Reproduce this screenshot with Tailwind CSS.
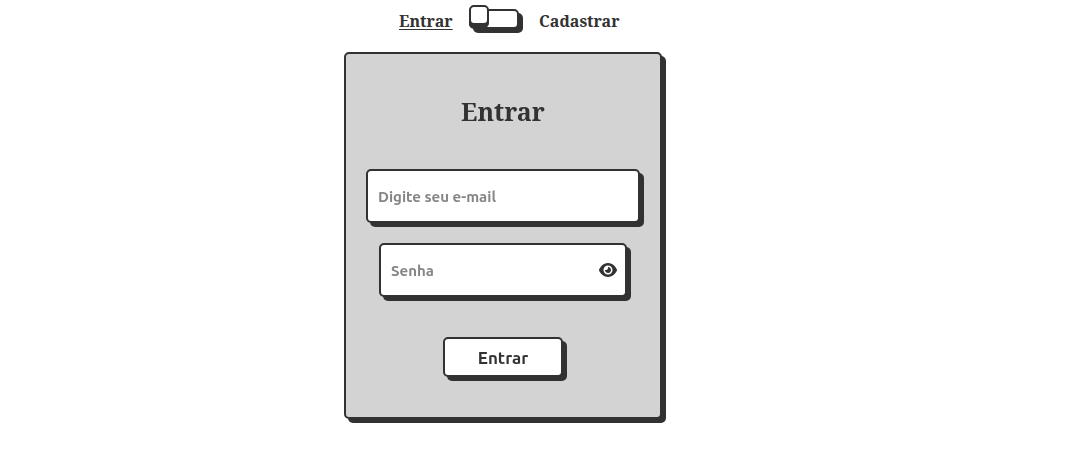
<!DOCTYPE html>
<html lang="pt-BR">
<head>
<meta charset="utf-8">
<title>Entrar</title>
<script src="https://cdn.jsdelivr.net/npm/@tailwindcss/browser@4"></script>
</head>
<body class="h-[467px] overflow-hidden bg-white text-[#323232]">
<main class="ml-[344px] flex w-[318px] flex-col">
  <div class="flex h-[52px] pl-[55px] font-['Noto_Serif','Droid_Serif','DejaVu_Serif',serif] text-base font-bold">
    <span class="mt-[9px] w-[54px] whitespace-nowrap leading-6"><span class="inline-block w-[54px] underline underline-offset-2">Entrar</span></span>
    <div class="relative ml-4 mt-[9px] h-5 w-[50px] rounded-[5px] border-2 border-[#323232] bg-white shadow-[4px_4px_#323232]">
      <div class="absolute -left-0.5 -top-1.5 h-5 w-5 rounded-[5px] border-2 border-[#323232] bg-white shadow-[0_3px_0_#323232]"></div>
    </div>
    <span class="ml-5 mt-[9px] whitespace-nowrap pl-[0.1px] leading-6">Cadastrar</span>
  </div>
  <form class="flex h-[367px] flex-col items-center rounded-[5px] border-2 border-[#323232] bg-[lightgrey] shadow-[4px_4px_#323232] will-change-transform">
    <h1 class="mt-[37px] font-['Noto_Serif','Droid_Serif','DejaVu_Serif',serif] text-[25px] font-bold leading-10">Entrar</h1>
    <div class="mt-[38px] flex h-[54px] w-[274px] items-center rounded-[5px] border-2 border-[#323232] bg-white px-2.5 shadow-[4px_4px_#323232]">
      <span class="pt-0.5 font-[Ubuntu,'Noto_Sans',sans-serif] text-[15px] font-semibold text-[#858585]">Digite seu e-mail</span>
    </div>
    <div class="mt-5 flex h-[54px] w-[248px] items-center justify-between rounded-[5px] border-2 border-[#323232] bg-white pl-2.5 pr-2 shadow-[4px_4px_#323232]">
      <span class="pt-0.5 font-[Ubuntu,'Noto_Sans',sans-serif] text-[15px] font-semibold text-[#858585]">Senha</span>
      <svg class="h-4 w-[18px]" viewBox="0 0 576 512" fill="#323232"><path d="M288 32c-80.8 0-145.500 36.800-192.600 80.600C48.600 156 17.300 208 2.500 243.700c-3.300 7.900-3.300 16.700 0 24.600C17.300 304 48.600 356 95.400 399.400C142.500 443.200 207.200 480 288 480s145.500-36.800 192.600-80.600c46.800-43.500 78.100-95.400 93-131.100c3.300-7.900 3.300-16.700 0-24.600c-14.900-35.700-46.200-87.700-93-131.100C433.500 68.800 368.800 32 288 32zM144 256a144 144 0 1 1 288 0a144 144 0 1 1-288 0zm144-64c0 35.300-28.700 64-64 64c-7.100 0-13.900-1.200-20.300-3.300c-5.500-1.800-11.900 1.600-11.700 7.400c.3 6.900 1.300 13.800 3.200 20.700c13.700 51.200 66.400 81.600 117.600 67.900s81.600-66.400 67.900-117.600c-11.100-41.500-47.800-69.400-88.600-71.100c-5.800-.2-9.200 6.100-7.400 11.700c2.100 6.400 3.300 13.200 3.300 20.300z"/></svg>
    </div>
    <button type="button" class="mt-10 h-10 w-[120px] rounded-[5px] border-2 border-[#323232] bg-white pt-0.5 font-[Ubuntu,'Noto_Sans',sans-serif] text-[17px] font-semibold shadow-[4px_4px_#323232]">Entrar</button>
  </form>
</main>
</body>
</html>
